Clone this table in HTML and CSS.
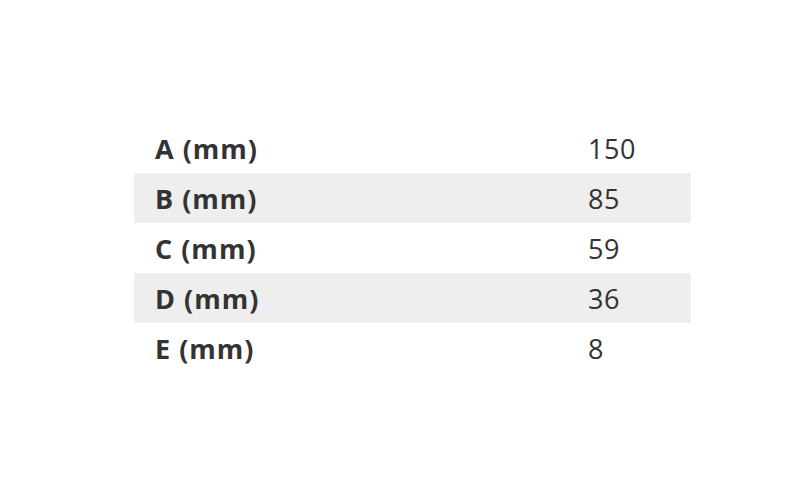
FILE: index.html
```html
<!DOCTYPE html>
<html>
<head>
<meta charset="utf-8">
<link rel="stylesheet" href="styles.css">
</head>
<body>
<div class="wrap">
  <table class="spec">
    <tr><th>A (mm)</th><td>150</td></tr>
    <tr class="alt"><th>B (mm)</th><td>85</td></tr>
    <tr><th>C (mm)</th><td>59</td></tr>
    <tr class="alt"><th>D (mm)</th><td>36</td></tr>
    <tr><th>E (mm)</th><td>8</td></tr>
  </table>
</div>
</body>
</html>
```
FILE: styles.css
```css
html, body {
  margin: 0;
  padding: 0;
  background: #fff;
}
.wrap {
  padding: 123px 0 0 134px;
}
.spec {
  border-collapse: collapse;
  width: 557px;
  font-family: "Open Sans", sans-serif;
  color: #333;
}
.spec tr {
  height: 50px;
}
.spec tr.alt {
  background: #eeeeee;
}
.spec th {
  text-align: left;
  font-size: 27px;
  font-weight: 700;
  letter-spacing: 1px;
  padding: 0 0 0 21px;
  width: 433px;
  vertical-align: middle;
}
.spec td {
  font-size: 27px;
  letter-spacing: 0.5px;
  padding: 0;
  vertical-align: middle;
}
```
